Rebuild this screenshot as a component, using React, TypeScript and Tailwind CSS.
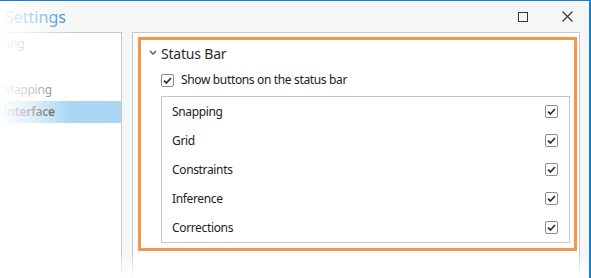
import React from 'react'

const font = { fontFamily: '"Noto Sans", "Open Sans", Arial, sans-serif' }

function Check() {
  return (
    <div className="w-[13px] h-[13px] rounded-[2px] border border-[#8c8c8c] bg-white flex items-center justify-center">
      <svg width="11" height="11" viewBox="0 0 11 11">
        <path d="M2 5.6 L4.4 8 L9 3" fill="none" stroke="#333" strokeWidth="1.8" />
      </svg>
    </div>
  )
}

const rows = ['Snapping', 'Grid', 'Constraints', 'Inference', 'Corrections']

export default function App() {
  return (
    <div
      className="relative w-[591px] h-[278px] overflow-hidden bg-[#f5f6f6] border-t border-r-2 border-[#1b7fd1] flex flex-col"
      style={font}
    >
      {/* title bar */}
      <div className="h-[31px] shrink-0 flex items-center pl-[5px] pr-[16px]">
        <span className="text-[16px] text-[#2a8ad8] leading-none">Settings</span>
        <div className="ml-auto flex items-center gap-[34px]">
          <div className="w-[10px] h-[10px] border border-[#333]" />
          <svg width="11" height="11" viewBox="0 0 11 11">
            <path d="M0.5 0.5 L10.5 10.5 M10.5 0.5 L0.5 10.5" stroke="#333" strokeWidth="1.1" />
          </svg>
        </div>
      </div>

      {/* body */}
      <div className="flex flex-1 gap-[10px] pr-[9px]">
        {/* nav */}
        <div className="w-[122px] bg-white border-t border-r border-[#c9c9c9] text-[12px] text-[#444] tracking-[-0.2px]">
          <div className="h-[22px] flex items-center text-[#888]">ping</div>
          <div className="h-[22px] mt-[24px] flex items-center pl-[3px] text-[#666]">Mapping</div>
          <div className="h-[22px] flex items-center pl-[3px] bg-[#a9d6f3] font-semibold text-[#333]">
            Interface
          </div>
        </div>

        {/* main panel */}
        <div className="flex-1 bg-white border-t border-l border-r border-[#c9c9c9] pt-[4px] pl-[5px] pr-[2px]">
          <div className="border-[3px] border-[#f0984c] h-[214px] pl-[8px] pr-[4px] pt-[5px]">
            <div className="flex items-center h-[16px] text-[14px] text-[#2b2b2b]">
              <svg width="12" height="8" viewBox="0 0 12 8" className="-ml-[1px]">
                <path d="M2 2 L5 5 L8 2" fill="none" stroke="#555" strokeWidth="1.4" />
              </svg>
              <span className="ml-[1px] tracking-[-0.2px]">Status Bar</span>
            </div>
            <div className="flex items-center mt-[10px] ml-[12px] text-[12px] text-[#222] tracking-[-0.35px]">
              <Check />
              <span className="ml-[7px]">Show buttons on the status bar</span>
            </div>
            <div className="ml-[12px] mt-[7px] border border-[#c6c6c6] h-[147px]">
              {rows.map((r) => (
                <div
                  key={r}
                  className="h-[29px] flex items-center justify-between pl-[10px] pr-[11px] text-[12px] text-[#222] tracking-[-0.35px]"
                >
                  <span>{r}</span>
                  <Check />
                </div>
              ))}
            </div>
          </div>
        </div>
      </div>

      {/* edge fades */}
      <div className="pointer-events-none absolute left-0 top-0 bottom-0 w-[70px] bg-gradient-to-r from-white via-white/60 to-transparent" />
      <div className="pointer-events-none absolute left-0 right-0 bottom-0 h-[26px] bg-gradient-to-b from-transparent to-white" />
    </div>
  )
}
